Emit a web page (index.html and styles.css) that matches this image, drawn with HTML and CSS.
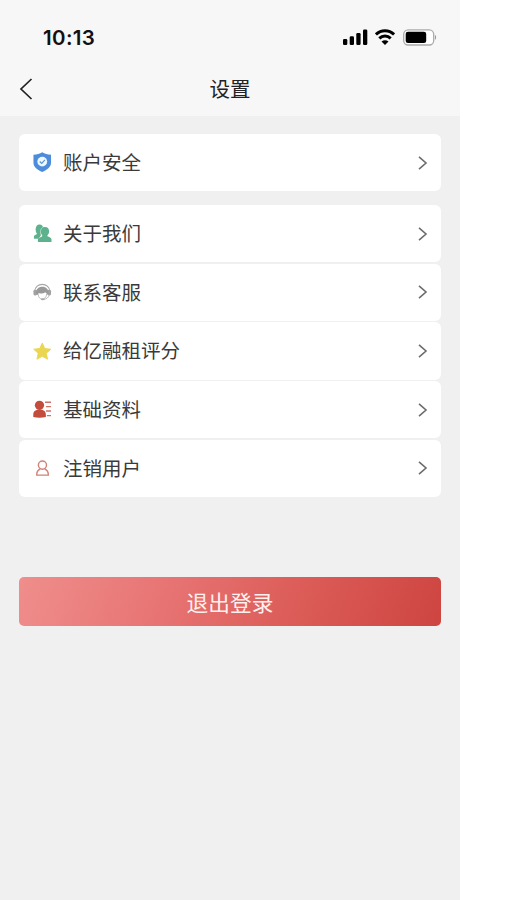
FILE: index.html
```html
<!DOCTYPE html>
<html lang="zh-CN">
<head>
<meta charset="utf-8">
<title>设置</title>
<link rel="stylesheet" href="styles.css">
</head>
<body>
<svg class="defs" width="0" height="0" aria-hidden="true">
  <symbol id="chevron" viewBox="0 0 10 16"><path d="M1 1.800 8 8l-7 6.200" fill="none" stroke="#6c6c6c" stroke-width="1.600"/></symbol>
</svg>
<div class="screen">
  <header class="top">
    <div class="status">
      <span class="time">10:13</span>
      <div class="indicators">
        <svg width="25" height="16" viewBox="0 0 25 16"><rect x="0" y="10" width="4.300" height="6" rx="1.300"/><rect x="6.700" y="7.300" width="4.300" height="8.700" rx="1.300"/><rect x="13.300" y="4" width="4.300" height="12" rx="1.300"/><rect x="20" y=".5" width="4.300" height="15.500" rx="1.300"/></svg>
        <svg class="wifi" width="20" height="16" viewBox="0 0 20 16"><g fill="none" stroke="#000" stroke-width="2.900"><path d="M.9 5.500C6 .4 14 .4 19.100 5.500"/><path d="M4.300 9.400c3.200-3.200 8.200-3.200 11.400 0"/></g><path d="M10 15.900 6.500 12.600q3.500-2.700 7 0z"/></svg>
        <svg class="battery" width="35" height="17" viewBox="0 0 35 17"><rect x=".7" y=".8" width="30" height="15.200" rx="4.500" fill="#fff" stroke="#aaa" stroke-width="1.300"/><rect x="2.700" y="2.800" width="20.500" height="11.200" rx="2.300"/><path d="M32 5.700q2.300 2.700 0 5.400z" fill="#999"/></svg>
      </div>
    </div>
    <nav class="nav">
      <svg class="back" width="14" height="22" viewBox="0 0 14 22"><path d="M12.500 1 2 11l10.500 10" fill="none" stroke="#222" stroke-width="1.700"/></svg>
      <h1 class="title">设置</h1>
    </nav>
  </header>
  <main class="content">
    <section class="group">
      <div class="row">
        <svg class="icon" viewBox="0 0 20 22"><path d="M10 .3c2.600 1.700 5.700 2.300 9.500 2.700v8.700c0 4.500-4.300 8-9.500 10-5.200-2-9.500-5.500-9.500-10V3C4.300 2.600 7.400 2 10 .3z" fill="#4d8cda"/><circle cx="10" cy="10.400" r="5.300" fill="#eef8ff"/><path d="m7.300 10.300 2.100 2 3.500-3.700" fill="none" stroke="#5792d6" stroke-width="1.200"/></svg>
        <span class="label">账户安全</span>
        <svg class="arrow"><use href="#chevron"/></svg>
      </div>
    </section>
    <section class="group">
      <div class="row">
        <svg class="icon" viewBox="0 0 20 22"><g fill="#5db18c"><path d="M6.800 1.500c3 0 4.500 2.200 4.200 5L8.500 9.500v4L6 17H1v-2.700c.5-1.600 3.500-1.600 3.200-3C1.900 8.300 2.500 1.500 6.800 1.500z"/><path d="M12.800 4.300c3.200 0 4.900 2.200 4.600 5.200-.1 1.700-.8 2.800-1.800 3.700v1c1.800 1 4.400 1.300 4.400 3.500V20.500H5.300v-2.800c.2-1.900 3-2.300 4.700-3.500v-1c-1.100-.9-1.800-2.200-1.800-3.800 0-3 1.500-5.100 4.600-5.100z"/></g><path d="M10.600 4.600C8 6.500 7.200 9.700 9 12.900" fill="none" stroke="#d5eee3" stroke-width=".7"/></svg>
        <span class="label">关于我们</span>
        <svg class="arrow"><use href="#chevron"/></svg>
      </div>
      <div class="row">
        <svg class="icon" viewBox="0 0 20 22"><path d="M2 10C2 .2 18 .2 18 10" fill="none" stroke="#a7a7a7" stroke-width="1.300"/><rect x=".5" y="8.500" width="3.700" height="6" rx="1.500" fill="#a2a2a2"/><rect x="15.800" y="8.500" width="3.700" height="6" rx="1.500" fill="#a2a2a2"/><path d="M3.300 13.500C1.300 2.300 18.700 2.300 16.700 13.500h-1.500c-.3-1.300-1-1.800-2-2.500-1.800 1.500-5 1.700-7.200 1.300L5 14z" fill="#999"/><path d="M5.500 13c.5 7.500 8.500 7.500 9.300 0M17.500 14c-.8 3-2.800 4.500-6 4.800" fill="none" stroke="#b1b1b1" stroke-width=".9"/><ellipse cx="10.500" cy="18.700" rx="2" ry="1" fill="#aaa"/></svg>
        <span class="label">联系客服</span>
        <svg class="arrow"><use href="#chevron"/></svg>
      </div>
      <div class="row">
        <svg class="icon" viewBox="0 0 20 22"><path d="m10 2.200 2.700 5.900 6.500.8-4.800 4.400 1.300 6.400L10 16.500l-5.700 3.200 1.300-6.400L.8 8.900l6.500-.8z" fill="#ead651" stroke="#ead651" stroke-width="1" stroke-linejoin="round"/></svg>
        <span class="label">给亿融租评分</span>
        <svg class="arrow"><use href="#chevron"/></svg>
      </div>
      <div class="row">
        <svg class="icon" viewBox="0 0 20 22"><g fill="#c34d3d"><circle cx="7" cy="6.800" r="5"/><path d="M.3 19.500v-3C.3 13 3.300 11.300 7.100 11.300s6.800 1.700 6.800 5.200v3q-6.800 1.300-13.600 0z"/></g><path d="M13 3.500h6.500M14 8.200h5.500M14 13h5.500M15 18h4.500" stroke="#cd7469" stroke-width="1.400"/></svg>
        <span class="label">基础资料</span>
        <svg class="arrow"><use href="#chevron"/></svg>
      </div>
      <div class="row">
        <svg class="icon" viewBox="0 0 20 22"><g fill="none" stroke="#d28178" stroke-width="1.500"><circle cx="10.200" cy="7.700" r="4.400"/><path d="M7.800 12.200c-3 .8-3.800 2.500-3.800 6.300h12.600c0-3.800-.8-5.500-3.900-6.300"/></g></svg>
        <span class="label">注销用户</span>
        <svg class="arrow"><use href="#chevron"/></svg>
      </div>
    </section>
    <button class="logout" type="button">退出登录</button>
  </main>
</div>
</body>
</html>
```

FILE: styles.css
```css
* { box-sizing: border-box; }
body {
  margin: 0;
  background: #fff;
  color: #3a3a3a;
  font-family: "Noto Sans CJK SC", sans-serif;
}
.defs { display: none; }
.screen {
  width: 460px;
  height: 900px;
  background: #f0f0f0;
}
.top {
  height: 116px;
  background: #f7f7f7;
}
.status {
  height: 64px;
  padding: 10px 22px 0 43px;
  display: flex;
  align-items: center;
  justify-content: space-between;
}
.time {
  padding-top: 1px;
  font: 600 20.5px/24px Inter, sans-serif;
  letter-spacing: 0.35px;
  color: #111;
}
.indicators { display: flex; align-items: center; }
.wifi { margin-left: 7px; }
.battery { margin-left: 8px; }
.nav {
  height: 50px;
  display: grid;
  grid-template-columns: 60px 1fr 60px;
  align-items: center;
}
.back { margin-left: 19px; }
.title {
  margin: 0;
  padding-bottom: 2px;
  text-align: center;
  font-size: 20.5px;
  line-height: 30px;
  font-weight: 400;
  color: #222;
}
.content {
  padding: 18px 19px 0;
  display: flex;
  flex-direction: column;
}
.group {
  display: flex;
  flex-direction: column;
  gap: 1.4px;
  margin-bottom: 13.6px;
}
.row {
  height: 57.3px;
  padding: 0 13.5px 0 14px;
  display: flex;
  align-items: center;
  border-radius: 6px;
  background: #fff;
}
.icon { width: 18.5px; height: 20.35px; }
.label {
  flex: 1;
  margin-left: 11.5px;
  padding-bottom: 1px;
  font-size: 19.5px;
  line-height: 28px;
}
.arrow { width: 10px; height: 16px; }
.logout {
  height: 49px;
  margin-top: 66.4px;
  padding: 1px 0 0;
  border: 0;
  border-radius: 5px;
  background: linear-gradient(110deg, #ef8e8c 0%, #e77473 35%, #dc5d59 64%, #ce4540 100%);
  color: #fff0ee;
  font: 21.7px/32px "Noto Sans CJK SC", sans-serif;
}
```
